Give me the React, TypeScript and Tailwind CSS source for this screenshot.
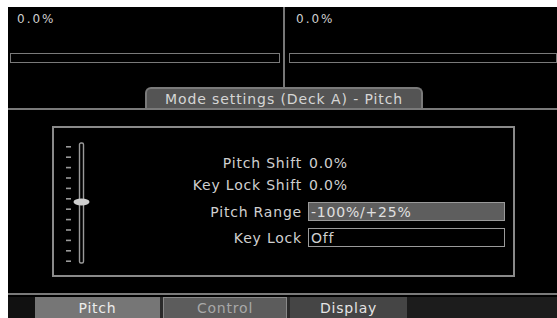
import React from 'react';

const font = { fontFamily: '"DejaVu Sans", "Open Sans", sans-serif' };

// Vertical pitch fader drawn as a small picture
const PitchFader: React.FC = () => {
  const ticks = Array.from({ length: 12 }, (_, i) => 4 + i * 10.4);
  return (
    <svg width="28" height="124" viewBox="0 0 28 124">
      {ticks.map((y) => (
        <rect key={y} x="0" y={y} width="5" height="1.6" fill="#9a9a9a" />
      ))}
      <rect x="13.5" y="1" width="4" height="120" rx="1.5" fill="#000" stroke="#9a9a9a" strokeWidth="1.4" />
      <ellipse cx="15.5" cy="60" rx="8" ry="3.4" fill="#cfcfcf" />
    </svg>
  );
};

const TopDeck: React.FC<{ value: string; right?: boolean }> = ({ value, right }) => (
  <div className={right ? 'flex-1 flex flex-col pl-[4px]' : 'w-[275px] flex flex-col pl-[2px] pr-[3px]'}>
    <div className="h-[46px] pl-[7px] pt-[6px] text-[12px] tracking-[2px] text-[#cfcfcf] leading-none">{value}</div>
    <div className="h-[10px] border border-[#7a7a7a] bg-black" />
  </div>
);

export default function App() {
  return (
    <div className="w-[557px] h-[318px] bg-white pt-[7px] pl-[8px] overflow-hidden" style={font}>
      <div className="h-full bg-black flex flex-col">
        {/* deck meters */}
        <div className="h-[80px] flex">
          <TopDeck value="0.0%" />
          <div className="w-[2px] bg-[#777]" />
          <TopDeck value="0.0%" right />
        </div>

        {/* mode tab */}
        <div className="h-[21px] flex">
          <div className="ml-[137px] w-[278px] rounded-t-[6px] bg-[#545454] border-t-2 border-x-2 border-[#7a7a7a] flex items-center justify-center text-[14px] tracking-[0.9px] text-[#d6d6d6] leading-none">
            Mode settings (Deck A) - Pitch
          </div>
        </div>
        <div className="h-[2px] bg-[#7a7a7a]" />

        {/* settings */}
        <div className="h-[183px] pt-[16px] pl-[44px]">
          <div className="w-[463px] h-[151px] border-2 border-[#8a8a8a] flex items-start">
            <div className="ml-[12px] mt-[14px]">
              <PitchFader />
            </div>
            <div className="mt-[24px] grid grid-cols-[208px_197px] gap-x-[6px] text-[14px] tracking-[0.8px] text-[#d0d0d0] leading-none">
              <div className="h-[22px] flex items-center justify-end">Pitch Shift</div>
              <div className="h-[22px] flex items-center pl-[1px]">0.0%</div>
              <div className="h-[22px] flex items-center justify-end">Key Lock Shift</div>
              <div className="h-[22px] flex items-center pl-[1px]">0.0%</div>
              <div className="h-[19px] mt-[6px] flex items-center justify-end">Pitch Range</div>
              <div className="h-[19px] mt-[6px] bg-[#5e5e5e] border border-[#9a9a9a] flex items-center pl-[2px] text-[#e0e0e0]">-100%/+25%</div>
              <div className="h-[19px] mt-[7px] flex items-center justify-end">Key Lock</div>
              <div className="h-[19px] mt-[7px] bg-black border border-[#9a9a9a] flex items-center pl-[2px]">Off</div>
            </div>
          </div>
        </div>
        <div className="h-[2px] bg-[#7a7a7a]" />
        <div className="h-[2px] bg-black" />

        {/* page tabs */}
        <div className="h-[21px] flex bg-[#1c1c1c] text-[14px] tracking-[0.8px] leading-none">
          <div className="w-[27px] bg-[#111]" />
          <div className="w-[125px] bg-[#767676] flex items-center justify-center text-[#ececec]">Pitch</div>
          <div className="w-[3px] bg-[#2a2a2a]" />
          <div className="w-[124px] bg-[#5c5c5c] border-t border-x border-[#888] flex items-center justify-center text-[#a8a8a8]">Control</div>
          <div className="w-[3px] bg-[#2a2a2a]" />
          <div className="w-[117px] bg-[#454545] flex items-center justify-center text-[#e4e4e4]">Display</div>
        </div>
      </div>
    </div>
  );
}
